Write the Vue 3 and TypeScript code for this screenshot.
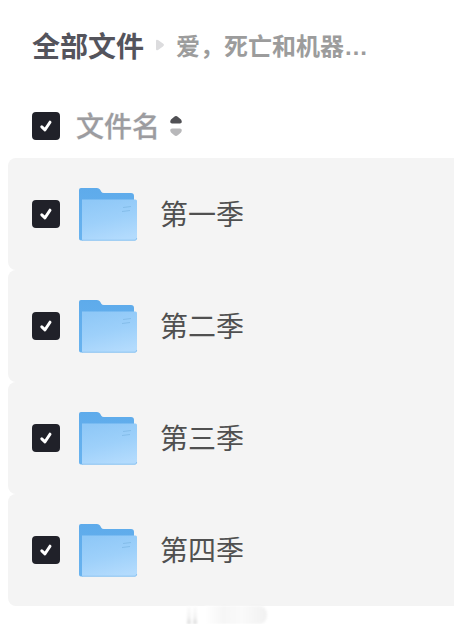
<script setup lang="ts">
import { computed, ref } from 'vue'

interface Folder {
  id: number
  name: string
  checked: boolean
}

const folders = ref<Folder[]>([
  { id: 1, name: '第一季', checked: true },
  { id: 2, name: '第二季', checked: true },
  { id: 3, name: '第三季', checked: true },
  { id: 4, name: '第四季', checked: true },
])

const ascending = ref(true)

const allChecked = computed<boolean>({
  get: () => folders.value.every((f) => f.checked),
  set: (value) => folders.value.forEach((f) => (f.checked = value)),
})

function toggleSort(): void {
  ascending.value = !ascending.value
  folders.value.reverse()
}
</script>

<template>
  <main class="files">
    <nav class="crumbs">
      <a class="crumb-root" href="#">全部文件</a>
      <svg class="crumb-arrow" viewBox="0 0 10 12" aria-hidden="true">
        <path d="M1 2Q1 0 3 1L8 4.600Q10 6 8 7.400L3 11Q1 12 1 10Z" fill="#dcdcde" />
      </svg>
      <a class="crumb-current" href="#">爱，死亡和机器<span class="dots">…</span></a>
    </nav>

    <header class="head">
      <label class="tick">
        <input id="all" v-model="allChecked" type="checkbox" aria-label="文件名" />
        <svg viewBox="0 0 28 28" aria-hidden="true"><path d="M9.800 14.800L13 17.800L18 10.200" /></svg>
      </label>
      <button class="sort" type="button" @click="toggleSort">
        <span class="text">文件名</span>
        <svg class="sort-icon" viewBox="0 0 14 22" aria-hidden="true">
          <path
            d="M7 1Q8 1 9 2L12 4.500Q14 8 11 8.500H3Q0 8 2 4.500L5 2Q6 1 7 1Z"
            :fill="ascending ? '#505054' : '#b8b8ba'"
          />
          <path
            d="M7 21Q8 21 9 20L12 17.500Q14 14 11 13.500H3Q0 14 2 17.500L5 20Q6 21 7 21Z"
            :fill="ascending ? '#b8b8ba' : '#505054'"
          />
        </svg>
      </button>
    </header>

    <svg class="defs" width="0" height="0" aria-hidden="true">
      <defs>
        <linearGradient id="folder-front" x1="0.300" y1="0" x2="0.600" y2="1">
          <stop offset="0" stop-color="#8fc8f7" />
          <stop offset="0.500" stop-color="#9dd0fa" />
          <stop offset="1" stop-color="#b3dbfd" />
        </linearGradient>
        <linearGradient id="folder-back" x1="0" y1="0" x2="0" y2="1">
          <stop offset="0" stop-color="#5eabeb" />
          <stop offset="1" stop-color="#69b3ef" />
        </linearGradient>
      </defs>
    </svg>

    <ul class="list">
      <li v-for="folder in folders" :key="folder.id" class="row">
        <span class="tick">
          <input :id="`folder-${folder.id}`" v-model="folder.checked" type="checkbox" />
          <svg viewBox="0 0 28 28" aria-hidden="true"><path d="M9.800 14.800L13 17.800L18 10.200" /></svg>
        </span>
        <label class="entry" :for="`folder-${folder.id}`">
          <svg class="folder" viewBox="0 0 60 56" aria-hidden="true">
            <path
              d="M1 4Q1 2 3 2H19Q21 2 22 3.500L23.500 6Q24 7 26 7H53Q56 7 56 10V52H5V54.500H3Q1 54.500 1 52.500Z"
              fill="url(#folder-back)"
            />
            <path d="M4 13.500H57.500Q59 13.500 59 15V52.500Q59 54.500 57 54.500H4Z" fill="url(#folder-front)" />
            <path d="M4 54.200H57Q58.700 54 58.700 52" fill="none" stroke="#8dc4f1" />
            <path d="M45 21.500L53 20.500M44 25.500L52 24.500" fill="none" stroke="#84bdea" />
          </svg>
          <span class="text">{{ folder.name }}</span>
        </label>
      </li>
    </ul>

    <div class="shade" aria-hidden="true">
      <i class="bar"></i>
      <i class="bar"></i>
      <i class="haze"></i>
    </div>
  </main>
</template>

<style>
body {
  background: #fff;
}
</style>

<style scoped>
.files {
  font-family: 'Noto Sans CJK SC', 'Liberation Sans', sans-serif;
  overflow: hidden;
}

.crumbs {
  display: flex;
  align-items: center;
  padding: 25px 32px 0;
  white-space: nowrap;
}

.crumbs a {
  text-decoration: none;
  line-height: 40px;
}

.crumb-root {
  color: #54545c;
  font-size: 28px;
  font-weight: 700;
}

.crumb-arrow {
  width: 10px;
  height: 12px;
  margin: 0 11px;
}

.crumb-current {
  color: #9c9c9c;
  font-size: 24px;
  font-weight: 700;
}

.dots {
  font-family: 'Liberation Sans', sans-serif;
  line-height: 1;
}

.head {
  display: flex;
  align-items: center;
  gap: 16px;
  padding: 40px 32px 11px;
}

.tick {
  position: relative;
  display: block;
  flex: none;
  width: 28px;
  height: 28px;
}

.tick input {
  appearance: none;
  display: block;
  width: 28px;
  height: 28px;
  margin: 0;
  border: 2px solid #c4c4c8;
  border-radius: 4px;
  background: #fff;
}

.tick input:checked {
  border-color: #202129;
  background: #202129;
}

.tick svg {
  position: absolute;
  inset: 0;
  fill: none;
  stroke: #fff;
  stroke-width: 3;
  stroke-linecap: round;
  stroke-linejoin: round;
  pointer-events: none;
}

.sort {
  display: flex;
  align-items: center;
  gap: 9px;
  padding: 0;
  border: 0;
  background: none;
  color: #9c9ca0;
  font-family: inherit;
  font-size: 28px;
  font-weight: 500;
  line-height: 40px;
  -webkit-text-stroke: 1px #9c9ca040;
}

.sort-icon {
  width: 14px;
  height: 22px;
}

.text {
  padding-bottom: 2px;
}

.defs {
  display: block;
}

.list {
  margin: 0;
  padding: 0 0 0 8px;
  list-style: none;
}

.row {
  display: flex;
  align-items: center;
  gap: 18px;
  height: 112px;
  padding: 0 24px;
  border-radius: 8px 0 0 8px;
  background: #f4f4f4;
}

.entry {
  display: flex;
  align-items: center;
  gap: 22px;
  color: #505050;
  font-size: 28px;
  line-height: 40px;
}

.folder {
  width: 60px;
  height: 56px;
}

.shade {
  display: flex;
  gap: 2px;
  height: 18px;
  padding-left: 187px;
  filter: blur(1px);
}

.bar {
  width: 4px;
  background: linear-gradient(#fdfdfd, #f4f4f4 60%, #dedede);
}

.haze {
  width: 62px;
  margin-left: 6px;
  border-radius: 0 8px 8px 0;
  background: linear-gradient(90deg, #fff, #f6f6f6 30%, #fafafa 60%, #f1f1f1);
}
</style>
